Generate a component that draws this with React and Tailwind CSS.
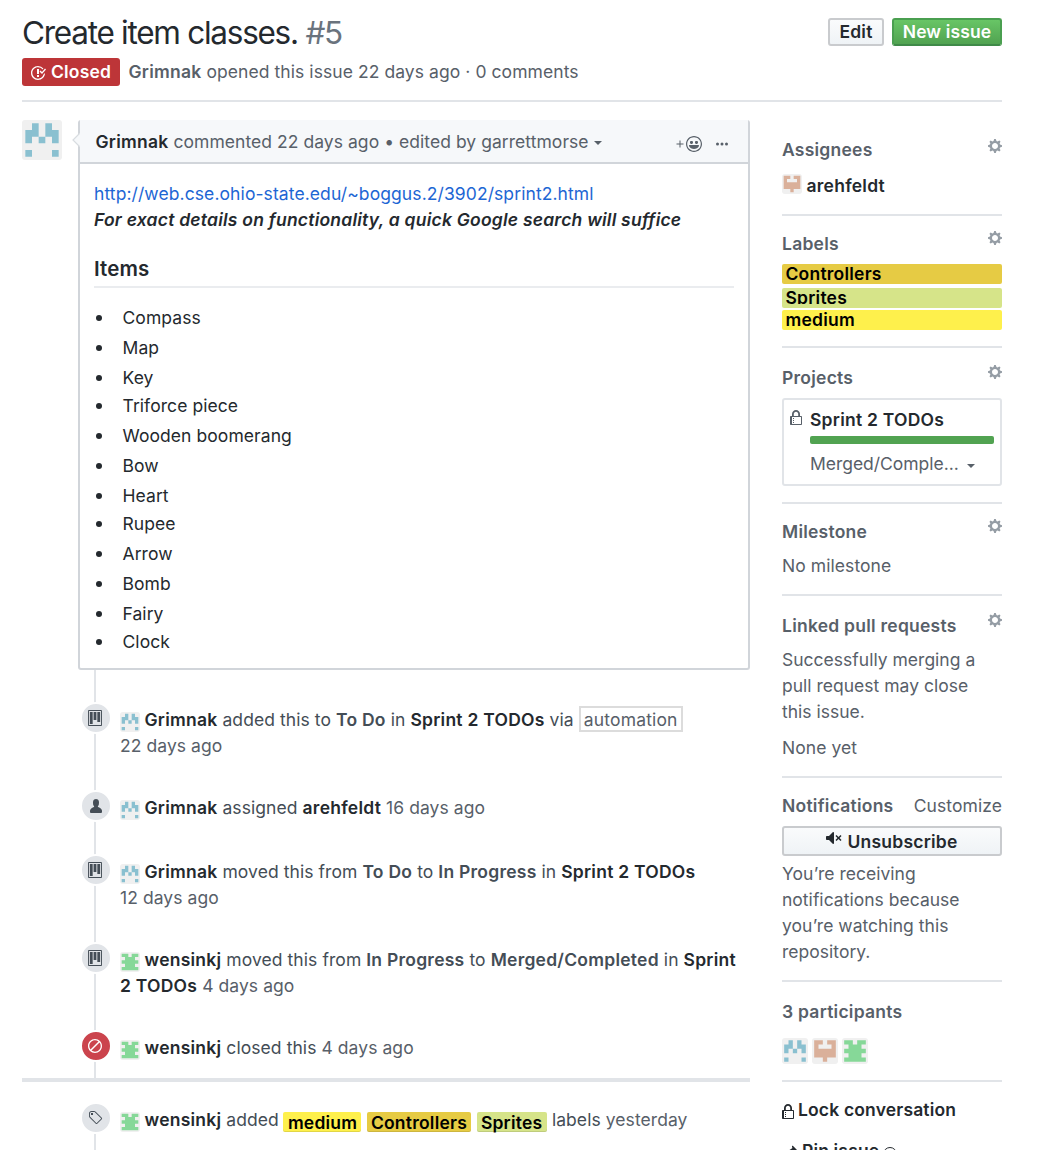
import React from "react";

const ICONS = {
  issueClosed: [16, "M7 10h2v2H7v-2zm2-6H7v5h2V4zm1.5 1.5l-1 1L12 9l4-4.5-1-1L12 7l-1.5-1.5zM8 13.7A5.71 5.71 0 0 1 2.3 8c0-3.14 2.56-5.7 5.7-5.7 1.83 0 3.45.88 4.5 2.2l.92-.92A6.947 6.947 0 0 0 8 1C4.14 1 1 4.14 1 8s3.14 7 7 7 7-3.14 7-7l-1.52 1.52c-.66 2.41-2.86 4.19-5.48 4.19v-.01z"],
  gear: [14, "M14 8.77v-1.6l-1.94-.64-.45-1.09.88-1.84-1.13-1.13-1.81.91-1.09-.45-.69-1.92h-1.6l-.63 1.94-1.11.45-1.84-.88-1.13 1.13.91 1.81-.45 1.09L0 7.23v1.59l1.94.64.45 1.09-.88 1.84 1.13 1.13 1.81-.91 1.09.45.69 1.92h1.59l.63-1.94 1.11-.45 1.84.88 1.13-1.13-.92-1.81.47-1.09L14 8.75v.02zM7 11c-1.66 0-3-1.34-3-3s1.34-3 3-3 3 1.34 3 3-1.34 3-3 3z"],
  lock: [12, "M4 13H3v-1h1v1zm8-6v7c0 .55-.45 1-1 1H1c-.55 0-1-.45-1-1V7c0-.55.45-1 1-1h1V4c0-2.2 1.8-4 4-4s4 1.8 4 4v2h1c.55 0 1 .45 1 1zM3.8 6h4.41V4c0-1.22-.98-2.2-2.2-2.2-1.22 0-2.2.98-2.2 2.2v2H3.8zM11 7H2v7h9V7zM4 8H3v1h1V8zm0 2H3v1h1v-1z"],
  tag: [15, "M7.73 1.73C7.26 1.26 6.62 1 5.96 1H3.5C2.13 1 1 2.13 1 3.5v2.47c0 .66.27 1.3.73 1.77l6.06 6.06c.39.39 1.02.39 1.41 0l4.59-4.59a.996.996 0 0 0 0-1.41L7.73 1.73zM2.38 7.09c-.31-.3-.47-.7-.47-1.13V3.5c0-.88.72-1.59 1.59-1.59h2.47c.42 0 .83.16 1.13.47l6.14 6.13-4.73 4.73-6.13-6.15zM3.01 3h2v2H3V3h.01z"],
  slash: [14, "M7 1C3.14 1 0 4.14 0 8s3.14 7 7 7 7-3.14 7-7-3.14-7-7-7zm0 1.3c1.3 0 2.5.44 3.47 1.17l-8 8A5.755 5.755 0 0 1 1.3 8c0-3.14 2.56-5.7 5.7-5.7zm0 11.41c-1.3 0-2.5-.44-3.47-1.17l8-8c.73.97 1.17 2.17 1.17 3.47 0 3.14-2.56 5.7-5.7 5.7z"],
  project: [15, "M10 12h3V2h-3v10zm-4-2h3V2H6v8zm-4 4h3V2H2v12zm-1 1h13V1H1v14zM14 0H1a1 1 0 0 0-1 1v14a1 1 0 0 0 1 1h13a1 1 0 0 0 1-1V1a1 1 0 0 0-1-1z"],
  person: [12, "M12 14.002a.998.998 0 0 1-.998.998H1.001A1 1 0 0 1 0 13.999V13c0-2.633 4-4 4-4s.229-.409 0-1c-.841-.62-.944-1.59-1-4 .173-2.413 1.867-3 3-3s2.827.586 3 3c-.056 2.41-.159 3.38-1 4-.229.59 0 1 0 1s4 1.367 4 4v1.002z"],
  mute: [16, "M8 2.81v10.38c0 .67-.81 1-1.28.53L3 10H1c-.55 0-1-.45-1-1V7c0-.55.45-1 1-1h2l3.72-3.72C7.19 1.81 8 2.14 8 2.81zm7.53 3.22l-1.06-1.06-1.97 1.97-1.97-1.97-1.06 1.06L11.44 8 9.47 9.97l1.06 1.06 1.97-1.97 1.97 1.97 1.06-1.06L13.56 8l1.97-1.97z"],
  smiley: [16, "M8 0C3.58 0 0 3.58 0 8s3.58 8 8 8 8-3.58 8-8-3.58-8-8-8zm4.81 12.81a6.72 6.72 0 0 1-2.17 1.45c-.83.36-1.72.53-2.64.53-.92 0-1.81-.17-2.64-.53-.81-.34-1.55-.83-2.17-1.45a6.773 6.773 0 0 1-1.45-2.17A6.59 6.59 0 0 1 1.21 8c0-.92.17-1.81.53-2.64.34-.81.83-1.55 1.45-2.17.62-.62 1.36-1.11 2.17-1.45A6.59 6.59 0 0 1 8 1.21c.92 0 1.81.17 2.64.53.81.34 1.55.83 2.17 1.45.62.62 1.11 1.36 1.45 2.17.36.83.53 1.72.53 2.64 0 .92-.17 1.81-.53 2.64-.34.81-.83 1.55-1.45 2.17zM4 6.8v-.59c0-.66.53-1.19 1.2-1.19h.59c.66 0 1.19.53 1.19 1.19v.59c0 .67-.53 1.2-1.19 1.2H5.2C4.53 8 4 7.47 4 6.8zm5 0v-.59c0-.66.53-1.19 1.2-1.19h.59c.66 0 1.19.53 1.19 1.19v.59c0 .67-.53 1.2-1.19 1.2h-.59C9.53 8 9 7.47 9 6.8zm4 3.2c-.72 1.88-2.91 3-5 3s-4.28-1.13-5-3c-.14-.39.23-1 .66-1h8.59c.41 0 .89.61.75 1z"],
  pin: [16, "M10 1.2V2l.5 1L6 6H2.2c-.44 0-.67.53-.34.86L5 10l-4 5 5-4 3.14 3.14a.5.5 0 0 0 .86-.34V10l3-4.5 1 .5h.8c.44 0 .67-.53.34-.86L10.86.86a.5.5 0 0 0-.86.34z"],
};

const Icon = ({ name, className = "" }) => (
  <svg
    viewBox={`0 0 ${ICONS[name][0]} 16`}
    width={name === "project" ? 14 : ICONS[name][0]}
    height={16}
    preserveAspectRatio="none"
    fill="currentColor"
    fillRule="evenodd"
    className={`block shrink-0 ${className}`}
  >
    <path d={ICONS[name][1]} />
  </svg>
);

const IDENTICONS = {
  grimnak: ["#8ac0d0", [".x.x.", "xx.xx", "x.x.x", ".....", "x...x"]],
  arehfeldt: ["#dab09a", ["xx.xx", "x...x", "xxxxx", "xxxxx", "..x.."]],
  wensinkj: ["#86d898", ["xx.xx", ".xxx.", "xxxxx", ".xxx.", "xxxxx"]],
};

const Avatar = ({ who, className = "" }) => {
  const [color, rows] = IDENTICONS[who];
  const d = rows.flatMap((r, y) => [...r].map((c, x) => (c === "x" ? `M${x + 0.5} ${y + 0.5}h1v1h-1z` : ""))).join("");
  return (
    <svg viewBox="0 0 6 6" className={`shrink-0 rounded-[3px] bg-[#f0f0f0] ${className}`}>
      <path d={d} fill={color} />
    </svg>
  );
};

const B = ({ children, className = "text-[#24292e]" }) => (
  <span className={`font-semibold tracking-[0.24px] ${className}`}>{children}</span>
);
const Ago = ({ children }) => <span className="text-[#586069]">{children}</span>;
const Caret = ({ className = "" }) => (
  <span className={`inline-block border-x-4 border-t-4 border-x-transparent border-t-current ${className}`} />
);

const Event = ({ icon, who, height, red, line = "top-0", children }) => (
  <div className={`relative pt-[19px] pl-[42px] ${height}`}>
    <div className={`absolute bottom-0 left-4 w-0.5 bg-[#e1e4e8] ${line}`} />
    <div className={`absolute left-0.5 top-3.5 flex size-8 items-center justify-center rounded-full border-2 border-white pr-0.5 ${red ? "bg-[#cb444d] text-white" : "bg-[#e1e4e8] text-[#444d56]"}`}>
      <Icon name={icon} className={icon === "person" ? "translate-x-px" : ""} />
    </div>
    <div className="whitespace-nowrap">
      <Avatar who={who} className="mr-[4.5px] inline-block size-5 translate-y-px align-[-5px]" />
      <B>{who === "grimnak" ? "Grimnak" : who}</B> {children}
    </div>
  </div>
);

const Token = ({ className, children }) => (
  <span className={`inline-block h-5 rounded-[2px] pl-1 align-[-3px] font-semibold leading-[22px] tracking-[0.22px] text-black shadow-[inset_0_-1px_0_rgba(27,31,35,0.12)] ${className}`}>{children}</span>
);

const Head = ({ children, gear }) => (
  <div className="flex h-[26px] items-start justify-between">
    <B className="text-[#586069]">{children}</B>
    <Icon name="gear" className={`text-[#959da5] ${gear}`} />
  </div>
);

const Section = ({ height, pt = "pt-[15px]", children }) => (
  <section className={`border-b-2 border-[#e1e4e8] ${height} ${pt}`}>{children}</section>
);

const ITEMS = ["Compass", "Map", "Key", "Triforce piece", "Wooden boomerang", "Bow", "Heart", "Rupee", "Arrow", "Bomb", "Fairy", "Clock"];
const GREY = "text-[#444d56]";

export default function App() {
  return (
    <div className="h-[1150px] w-[1042px] overflow-hidden bg-white pl-[22px] font-['Inter',sans-serif] text-[17.5px] leading-[26px] tracking-[0.07px] text-[#586069]">
      <div className="w-[980px]">
        <header className="h-[102px] border-b-2 border-[#e1e4e8] pt-[18px]">
          <div className="flex h-10 items-start justify-between">
            <h1 className="whitespace-nowrap text-[31.5px] leading-[30px] tracking-[-1.26px] text-[#24292e]">
              Create item classes. <span className="text-[#6a737d]">#5</span>
            </h1>
            <div className="flex gap-2">
              <button className="h-7 w-14 rounded-[3px] border-2 border-[#c9cbce] bg-linear-to-b from-[#fafbfc] to-[#eff3f6] font-semibold leading-6 tracking-[0.24px] text-[#24292e]">Edit</button>
              <button className="h-7 w-[110px] whitespace-nowrap rounded-[3px] border-2 border-[#4a9f50] border-b-[#3f8a48] bg-linear-to-b from-[#68c566] to-[#51a351] font-semibold leading-6 tracking-[0.13px] text-white">New issue</button>
            </div>
          </div>
          <div className="flex h-7 items-center">
            <span className="flex h-7 w-[98px] items-center rounded-[3px] bg-[#bd3538] pl-2 font-semibold tracking-[0.18px] text-white">
              <Icon name="issueClosed" className="mr-[5px] mt-0.5" />
              Closed
            </span>
            <span className="ml-[8.5px] whitespace-nowrap">
              <B className="text-[#586069]">Grimnak</B> opened this issue 22 days ago · 0 comments
            </span>
          </div>
        </header>

        <div className="flex items-start justify-between">
          <main className="w-[728px]">
            <div className="flex pt-[18px]">
              <Avatar who="grimnak" className="size-10" />
              <article className="relative ml-4 h-[550px] w-[672px] rounded-[3px] border-x-2 border-b-2 border-[#d1d5da]">
                <svg className="absolute -left-[8px] top-[12px]" width="9" height="16" viewBox="0 0 9 16">
                  <path d="M9 0L1 8l8 8z" fill="#f6f8fa" />
                  <path d="M7.5 1.5L1 8l6.5 6.5" fill="none" stroke="#d8dce0" strokeWidth="1.2" />
                </svg>
                <div className="flex h-11 items-center border-b-2 border-[#d1d5da] bg-[#f6f8fa] pl-[15.5px] pr-[19px] pt-0.5">
                  <span className="whitespace-nowrap tracking-[0.05px]">
                    <B>Grimnak</B> commented 22 days ago • edited by garrettmorse
                  </span>
                  <Caret className="ml-[5px] mt-px" />
                  <svg className="ml-auto mt-1" width="8" height="8" viewBox="0 0 8 8" stroke="currentColor" fill="none"><path d="M4 .5v7M.5 4h7" /></svg>
                  <Icon name="smiley" className="ml-[2px] mt-1" />
                  <svg className="ml-[13px] mt-1" width="14" height="4" viewBox="0 0 14 4" fill="currentColor"><circle cx="2.5" cy="2" r="1.5" /><circle cx="7" cy="2" r="1.5" /><circle cx="11.5" cy="2" r="1.5" /></svg>
                </div>
                <div className="px-3.5 pt-[17px] text-[#24292e]">
                  <p className="whitespace-nowrap tracking-[0.09px] text-[#1d66d4]">http://web.cse.ohio-state.edu/~boggus.2/3902/sprint2.html</p>
                  <p className="whitespace-nowrap font-semibold italic tracking-[0.225px]">For exact details on functionality, a quick Google search will suffice</p>
                  <h3 className="mt-[23px] h-8 border-b-2 border-[#eaecef] text-[20.5px] font-semibold tracking-[0.1px]">Items</h3>
                  <ul className="mt-[17px]">
                    {ITEMS.map((t, i) => (
                      <li key={t} className={`flex items-center ${i === 0 ? "" : i % 4 === 3 ? "mt-0.5" : "mt-1"}`}>
                        <span className="mb-px ml-[2px] size-1.5 rounded-full bg-[#24292e]" />
                        <span className="ml-[20.5px]">{t}</span>
                      </li>
                    ))}
                  </ul>
                </div>
              </article>
            </div>

            <div className={`pl-14 ${GREY}`}>
              <div className="ml-4 h-[18px] w-0.5 bg-[#e1e4e8]" />
              <Event icon="project" who="grimnak" height="h-[88px]">
                added this to <B className={GREY}>To Do</B> in <B>Sprint 2 TODOs</B> via{" "}
                <span className="-mt-px inline-block h-[26px] w-[104px] border-2 border-[#dcdcdc] text-center leading-6 tracking-[0.17px] text-[#586069] align-top">automation</span>
                <br /><Ago>22 days ago</Ago>
              </Event>
              <Event icon="person" who="grimnak" height="h-16">
                assigned <B>arehfeldt</B> <Ago>16 days ago</Ago>
              </Event>
              <Event icon="project" who="grimnak" height="h-[88px]">
                moved this from <B className={GREY}>To Do</B> to <B className={GREY}>In Progress</B> in <B>Sprint 2 TODOs</B>
                <br /><Ago>12 days ago</Ago>
              </Event>
              <Event icon="project" who="wensinkj" height="h-[88px]">
                moved this from <B className={GREY}>In Progress</B> to <B className={GREY}>Merged/Completed</B> in <B>Sprint<br />2 TODOs</B> <Ago>4 days ago</Ago>
              </Event>
              <Event icon="slash" who="wensinkj" height="h-[62px]" red>
                closed this <Ago>4 days ago</Ago>
              </Event>
            </div>
            <div className="h-1 bg-[#e1e4e8]" />
            <div className={`pl-14 pt-1.5 ${GREY}`}>
              <Event icon="tag" who="wensinkj" height="h-[62px]" line="top-[46px]">
                added
                <Token className="ml-1 w-[78px] bg-[#fef04c] pl-[5px]">medium</Token>
                <Token className="ml-1.5 w-[104px] bg-[#e6cb44]">Controllers</Token>
                <Token className="ml-1.5 mr-[5px] w-[70px] bg-[#d6e489]">Sprites</Token>
                labels <Ago>yesterday</Ago>
              </Event>
            </div>
          </main>

          <aside className="w-[220px]">
            <Section height="h-[114px]" pt="pt-[35px]">
              <Head gear="mt-[1px]">Assignees</Head>
              <div className="mt-2.5 flex items-center">
                <Avatar who="arehfeldt" className="-mt-1 size-5" />
                <span className="ml-[4.5px] font-semibold tracking-[0.24px] text-[#24292e]">arehfeldt</span>
              </div>
            </Section>
            <Section height="h-[132px]">
              <Head gear="mt-[-1px]">Labels</Head>
              <div className="mt-[7px] font-semibold leading-5 tracking-[0.22px] text-black">
                <div className="h-5 overflow-hidden rounded-[2px] bg-[#e6cb44] pl-[3.5px]">Controllers</div>
                <div className="mt-1 h-5 rounded-[2px] bg-[#d6e489] pl-[3.5px]"><div className="h-[16px] overflow-hidden">Sprites</div></div>
                <div className="mt-0.5 h-5 overflow-hidden rounded-[2px] bg-[#fef04c] pl-[3.5px]">medium</div>
              </div>
            </Section>
            <Section height="h-[156px]" pt="pt-[17px]">
              <Head gear="mt-[-1px]">Projects</Head>
              <div className="mt-[7px] flex h-[88px] rounded-[3px] border-2 border-[#e1e4e8] px-1.5 pt-[7px]">
                <Icon name="lock" className="mt-[3px] h-4" />
                <div className="ml-2 flex-1">
                  <B className="block text-[#24292e]">Sprint 2 TODOs</B>
                  <div className="mt-[3px] h-2 rounded-[2px] bg-[#51a351]" />
                  <div className="mt-[7px] flex items-center whitespace-nowrap tracking-[-0.03px]">Merged/Comple...<Caret className="ml-2 mt-[3px]" /></div>
                </div>
              </div>
            </Section>
            <Section height="h-[92px]">
              <Head gear="mt-[-1px]">Milestone</Head>
              <p className="mt-2">No milestone</p>
            </Section>
            <Section height="h-[182px]" pt="pt-[17px]">
              <Head gear="mt-[-1px]">Linked pull requests</Head>
              <p className="mt-2 tracking-[0.01px]">Successfully merging a<br />pull request may close<br />this issue.</p>
              <p className="mt-2.5">None yet</p>
            </Section>
            <Section height="h-[204px]">
              <div className="flex justify-between"><B className="text-[#586069]">Notifications</B><span>Customize</span></div>
              <button className="mt-[7px] flex h-[30px] w-full items-center justify-center rounded-[3px] border-2 border-[#c9cbce] bg-linear-to-b from-[#fafbfc] to-[#eff3f6] pt-0.5 font-semibold tracking-[0.24px] text-[#24292e]">
                <Icon name="mute" className="-mt-2 mr-[5px]" />Unsubscribe
              </button>
              <p className="mt-[5px] tracking-[0.02px]">You’re receiving<br />notifications because<br />you’re watching this<br />repository.</p>
            </Section>
            <Section height="h-[100px]" pt="pt-[17px]">
              <B className="block text-[#586069]">3 participants</B>
              <div className="mt-[13px] flex gap-1">
                <Avatar who="grimnak" className="size-[26px]" />
                <Avatar who="arehfeldt" className="size-[26px]" />
                <Avatar who="wensinkj" className="size-[26px]" />
              </div>
            </Section>
            <div className="pt-[15px] font-semibold tracking-[0.16px] text-[#24292e]">
              <div className="flex items-center"><Icon name="lock" className="mr-1 mt-1" />Lock conversation</div>
              <div className="mt-[15px] flex items-center"><Icon name="pin" className="mr-1 mt-1" />Pin issue<span className="ml-1 mt-1.5 size-[14px] rounded-full border border-current" /></div>
            </div>
          </aside>
        </div>
      </div>
    </div>
  );
}
